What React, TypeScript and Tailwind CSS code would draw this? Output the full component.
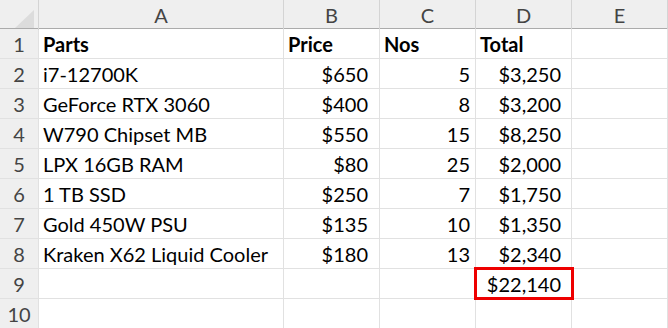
const cols = ["A", "B", "C", "D", "E"];

type Row = { part: string; price: string; nos: string; total: string };

const rows: Row[] = [
  { part: "i7-12700K", price: "$650", nos: "5", total: "$3,250" },
  { part: "GeForce RTX 3060", price: "$400", nos: "8", total: "$3,200" },
  { part: "W790 Chipset MB", price: "$550", nos: "15", total: "$8,250" },
  { part: "LPX 16GB RAM", price: "$80", nos: "25", total: "$2,000" },
  { part: "1 TB SSD", price: "$250", nos: "7", total: "$1,750" },
  { part: "Gold 450W PSU", price: "$135", nos: "10", total: "$1,350" },
  { part: "Kraken X62 Liquid Cooler", price: "$180", nos: "13", total: "$2,340" },
];

const grid = "grid grid-cols-[39px_245px_96px_96px_96px_1fr]";
const cell = "h-[30px] border-b border-r border-[#e1e1e1] flex items-center whitespace-nowrap";
const rowHead = "h-[30px] border-b border-r border-[#e1e1e1] bg-[#efefef] flex items-center justify-center text-[#444]";

function DataRow({ n, r }: { n: number; r?: Row }) {
  return (
    <div className={grid}>
      <div className={rowHead}>{n}</div>
      <div className={`${cell} pl-[4px]`}>{r?.part}</div>
      <div className={`${cell} justify-end pr-[11px]`}>{r?.price}</div>
      <div className={`${cell} justify-end pr-[5px]`}>{r?.nos}</div>
      <div className={`${cell} justify-end pr-[10px]`}>{r?.total}</div>
      <div className={cell} />
    </div>
  );
}

export default function App() {
  return (
    <div className="w-[668px] h-[328px] overflow-hidden bg-white text-[20px] text-black font-['Lato',sans-serif]">
      <div className={`${grid} h-[29px] bg-[#efefef] border-b border-[#ababab] text-[#444]`}>
        <div className="border-r border-[#d4d4d4] relative">
          <div className="absolute right-[4px] bottom-[2px] w-0 h-0 border-l-[19px] border-l-transparent border-b-[18px] border-b-[#dcdcdc]" />
        </div>
        {cols.map((c) => (
          <div key={c} className="border-r border-[#d4d4d4] flex items-center justify-center">
            {c}
          </div>
        ))}
      </div>

      <div className={grid}>
        <div className={rowHead}>1</div>
        <div className={`${cell} pl-[4px] font-bold`}>Parts</div>
        <div className={`${cell} pl-[4px] font-bold`}>Price</div>
        <div className={`${cell} pl-[4px] font-bold`}>Nos</div>
        <div className={`${cell} pl-[4px] font-bold`}>Total</div>
        <div className={cell} />
      </div>

      {rows.map((r, i) => (
        <DataRow key={r.part} n={i + 2} r={r} />
      ))}

      <div className={grid}>
        <div className={rowHead}>9</div>
        <div className={cell} />
        <div className={cell} />
        <div className={cell} />
        <div className={`${cell} relative justify-end pr-[10px]`}>
          $22,140
          <div className="absolute left-[-2px] top-[-2px] w-[100px] h-[33px] border-[3px] border-[#ee0000]" />
        </div>
        <div className={cell} />
      </div>

      <DataRow n={10} />
    </div>
  );
}
